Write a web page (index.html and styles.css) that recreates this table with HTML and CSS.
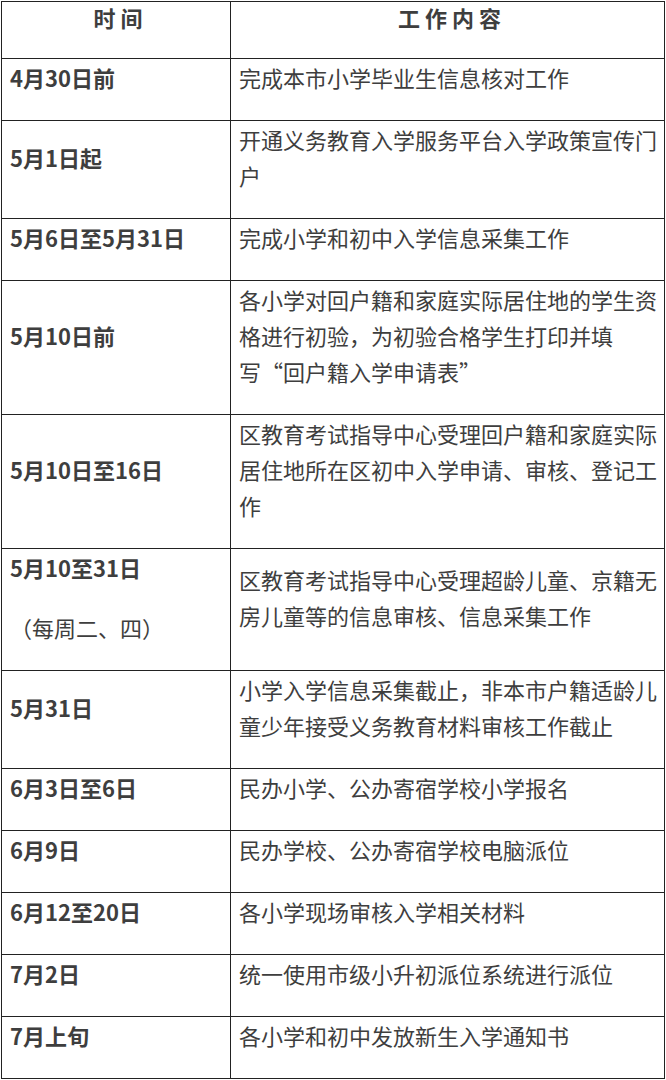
FILE: index.html
```html
<!DOCTYPE html>
<html lang="zh-CN">
<head>
<meta charset="utf-8">
<title>入学工作时间安排</title>
<link rel="stylesheet" href="styles.css">
</head>
<body>
<table class="schedule">
  <colgroup><col class="c-time"><col class="c-work"></colgroup>
  <thead>
    <tr><th><p>时 间</p></th><th><p>工 作 内 容</p></th></tr>
  </thead>
  <tbody>
    <tr><td class="t"><p>4月30日前</p></td><td><p>完成本市小学毕业生信息核对工作</p></td></tr>
    <tr><td class="t"><p>5月1日起</p></td><td><p>开通义务教育入学服务平台入学政策宣传门<br>户</p></td></tr>
    <tr><td class="t"><p>5月6日至5月31日</p></td><td><p>完成小学和初中入学信息采集工作</p></td></tr>
    <tr><td class="t"><p>5月10日前</p></td><td><p>各小学对回户籍和家庭实际居住地的学生资<br>格进行初验，为初验合格学生打印并填<br>写“回户籍入学申请表”</p></td></tr>
    <tr><td class="t"><p>5月10日至16日</p></td><td><p>区教育考试指导中心受理回户籍和家庭实际<br>居住地所在区初中入学申请、审核、登记工<br>作</p></td></tr>
    <tr><td class="t"><p>5月10至31日</p><p class="note">（每周二、四）</p></td><td><p>区教育考试指导中心受理超龄儿童、京籍无<br>房儿童等的信息审核、信息采集工作</p></td></tr>
    <tr><td class="t"><p>5月31日</p></td><td><p>小学入学信息采集截止，非本市户籍适龄儿<br>童少年接受义务教育材料审核工作截止</p></td></tr>
    <tr><td class="t"><p>6月3日至6日</p></td><td><p>民办小学、公办寄宿学校小学报名</p></td></tr>
    <tr><td class="t"><p>6月9日</p></td><td><p>民办学校、公办寄宿学校电脑派位</p></td></tr>
    <tr><td class="t"><p>6月12至20日</p></td><td><p>各小学现场审核入学相关材料</p></td></tr>
    <tr><td class="t"><p>7月2日</p></td><td><p>统一使用市级小升初派位系统进行派位</p></td></tr>
    <tr><td class="t"><p>7月上旬</p></td><td><p>各小学和初中发放新生入学通知书</p></td></tr>
  </tbody>
</table>
</body>
</html>
```
FILE: styles.css
```css
html, body {
  margin: 0;
  padding: 0;
  background: #ffffff;
}
body {
  padding: 1px 0 0 1px;
  font-family: "Noto Sans CJK SC", "Noto Sans", sans-serif;
  font-size: 22px;
  color: #3e3e3e;
}
.schedule {
  width: 664px;
  border-collapse: collapse;
  table-layout: fixed;
  border: 1px solid #444;
  box-shadow: 0 1px 0 #9a9a9a;
}
.c-time { width: 229px; }
.schedule th,
.schedule td {
  border: 1px solid #222;
  padding: 0 4px 1px 8px;
  vertical-align: middle;
  text-align: left;
  font-weight: normal;
}
.schedule th {
  text-align: center;
  font-weight: bold;
  padding-bottom: 0;
}
.schedule p {
  margin: 0 0 24px;
  line-height: 36px;
  white-space: nowrap;
}
.schedule th p {
  margin: -3px 0 23px;
}
.schedule td.t {
  font-weight: bold;
}
.schedule td.t p.note {
  font-weight: normal;
}
```
